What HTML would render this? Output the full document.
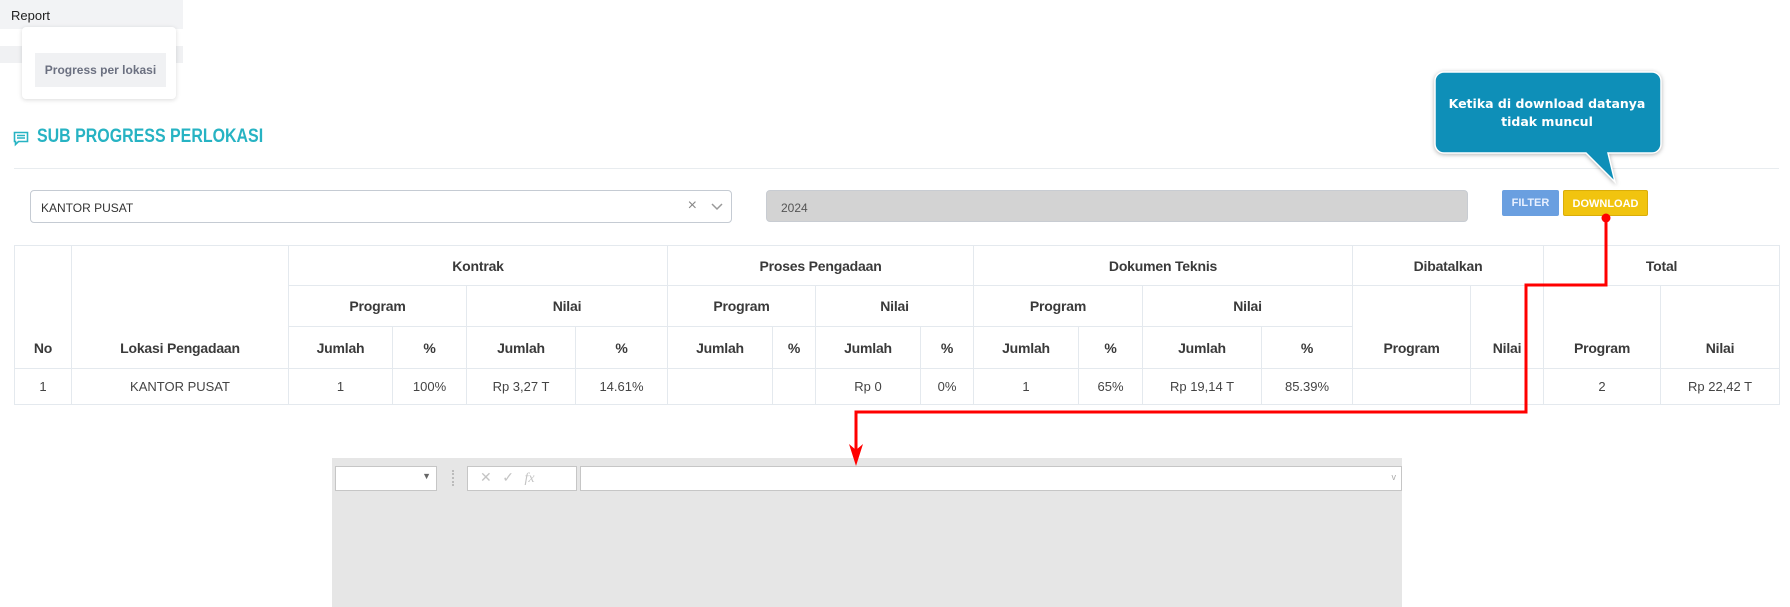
<!DOCTYPE html>
<html><head><meta charset="utf-8"><style>
*{box-sizing:border-box;margin:0;padding:0}
body{width:1790px;height:607px;overflow:hidden;background:#fff;font-family:"Liberation Sans",sans-serif;color:#333;position:relative}
.abs{position:absolute}
table{position:absolute;left:14px;top:245px;border-collapse:collapse;table-layout:fixed;width:1765px}
td,th{border:1px solid #e4e9ee;text-align:center;font-size:13px;color:#444}
th{font-size:14px;font-weight:bold;color:#3a3a3a;vertical-align:middle;letter-spacing:-0.2px}
th.b{vertical-align:bottom;padding-bottom:12px}
.r1{height:40px}.r2{height:41px}.r3{height:42px}.r4{height:36px}
</style></head><body>
<div class="abs" style="left:0;top:0;width:183px;height:29px;background:#f2f3f5;font-size:13px;padding:8px 11px;color:#222">Report</div>
<div class="abs" style="left:0;top:46px;width:183px;height:17px;background:#f0f1f3"></div>
<div class="abs" style="left:22px;top:27px;width:154px;height:72px;background:#fff;border-radius:4px;box-shadow:0 1px 5px rgba(0,0,0,.15)"></div>
<div class="abs" style="left:35px;top:53px;width:131px;height:34px;background:#f0f1f3;font-weight:bold;font-size:12px;color:#6b7080;padding-top:10px;text-align:center">Progress per lokasi</div>
<svg class="abs" style="left:13px;top:131px" width="16" height="16" viewBox="0 0 16 16"><path d="M1.5 1.5h13v9h-9l-3 3v-3h-1z" fill="none" stroke="#27b3c3" stroke-width="1.6"/><path d="M4 4.5h8M4 7h8" stroke="#27b3c3" stroke-width="1.4"/></svg>
<div class="abs" style="left:37px;top:126px;font-size:19px;font-weight:bold;color:#27b3c3;transform:scaleX(.84);transform-origin:left;white-space:nowrap">SUB PROGRESS PERLOKASI</div>
<div class="abs" style="left:14px;top:168px;width:1765px;height:1px;background:#e8ecef"></div>
<div class="abs" style="left:30px;top:190px;width:702px;height:33px;border:1px solid #c5cbd3;border-radius:4px;font-size:12px;padding:10px 10px;color:#333">KANTOR PUSAT
<span style="position:absolute;right:34px;top:6px;font-size:16px;color:#888">×</span>
<svg style="position:absolute;right:8px;top:12px" width="12" height="8"><path d="M1 1l5 5 5-5" fill="none" stroke="#999" stroke-width="1.5"/></svg></div>
<div class="abs" style="left:766px;top:190px;width:702px;height:32px;background:#d3d3d3;border:1px solid #c8ccd2;border-radius:4px;font-size:12px;padding:10px 14px;color:#555">2024</div>
<div class="abs" style="left:1502px;top:190px;width:57px;height:26px;background:#6a9fe0;border-radius:2px;color:#e8f0ff;font-size:11px;font-weight:bold;text-align:center;padding-top:7px">FILTER</div>
<div class="abs" style="left:1563px;top:190px;width:85px;height:26px;background:#f1c40f;border:1px solid #d9ad0a;border-radius:2px;color:#fff;font-size:11px;font-weight:bold;text-align:center;padding-top:7px">DOWNLOAD</div>
<svg class="abs" style="left:1430px;top:68px" width="240" height="125"><path d="M14 4h208a9 9 0 0 1 9 9v63a9 9 0 0 1-9 9h-44l7 29-29-29H14a9 9 0 0 1-9-9V13a9 9 0 0 1 9-9z" fill="#0e8fb8" stroke="#fff" stroke-width="1.5" style="filter:drop-shadow(0 1px 2px rgba(0,0,0,.3))"/></svg>
<div class="abs" style="left:1436px;top:95px;width:222px;text-align:center;color:#fff;font-family:'DejaVu Sans',sans-serif;font-weight:bold;font-size:12.5px;line-height:18px">Ketika di download datanya<br>tidak muncul</div>
<table>
<colgroup><col style="width:57px"><col style="width:217px"><col style="width:104px"><col style="width:74px"><col style="width:109px"><col style="width:92px"><col style="width:105px"><col style="width:43px"><col style="width:105px"><col style="width:53px"><col style="width:105px"><col style="width:64px"><col style="width:119px"><col style="width:91px"><col style="width:118px"><col style="width:73px"><col style="width:117px"><col style="width:119px"></colgroup>
<tr class="r1"><th rowspan="3" class="b">No</th><th rowspan="3" class="b">Lokasi Pengadaan</th><th colspan="4">Kontrak</th><th colspan="4">Proses Pengadaan</th><th colspan="4">Dokumen Teknis</th><th colspan="2">Dibatalkan</th><th colspan="2">Total</th></tr>
<tr class="r2"><th colspan="2">Program</th><th colspan="2">Nilai</th><th colspan="2">Program</th><th colspan="2">Nilai</th><th colspan="2">Program</th><th colspan="2">Nilai</th><th rowspan="2" class="b">Program</th><th rowspan="2" class="b">Nilai</th><th rowspan="2" class="b">Program</th><th rowspan="2" class="b">Nilai</th></tr>
<tr class="r3"><th>Jumlah</th><th>%</th><th>Jumlah</th><th>%</th><th>Jumlah</th><th>%</th><th>Jumlah</th><th>%</th><th>Jumlah</th><th>%</th><th>Jumlah</th><th>%</th></tr>
<tr class="r4"><td>1</td><td>KANTOR PUSAT</td><td>1</td><td>100%</td><td>Rp 3,27 T</td><td>14.61%</td><td></td><td></td><td>Rp 0</td><td>0%</td><td>1</td><td>65%</td><td>Rp 19,14 T</td><td>85.39%</td><td></td><td></td><td>2</td><td>Rp 22,42 T</td></tr>
</table>
<div class="abs" style="left:332px;top:458px;width:1070px;height:149px;background:#e6e6e6"></div>
<div class="abs" style="left:335px;top:466px;width:102px;height:25px;background:#fff;border:1px solid #c6c6c6"><span style="position:absolute;right:5px;top:4px;font-size:9px;color:#666">▼</span></div>
<div class="abs" style="left:452px;top:470px;width:2px;height:16px;border-left:2px dotted #bbb"></div>
<div class="abs" style="left:467px;top:466px;width:110px;height:25px;background:#fff;border:1px solid #c6c6c6;color:#c4c4c4;font-size:14px;padding:3px 0 0 12px;font-family:'Liberation Serif',serif">✕ &nbsp; ✓ &nbsp; <i>fx</i></div>
<div class="abs" style="left:580px;top:466px;width:822px;height:25px;background:#fff;border:1px solid #c6c6c6"><span style="position:absolute;right:5px;top:5px;font-size:9px;color:#aaa">v</span></div>
<svg class="abs" style="left:0;top:0" width="1790" height="607"><path d="M1606 218V285H1526V412H856V458" fill="none" stroke="#f00" stroke-width="3"/><circle cx="1606" cy="218" r="4.5" fill="#f00"/><path d="M849 444L856 466L863 444L856 450Z" fill="#f00"/></svg>
</body></html>
